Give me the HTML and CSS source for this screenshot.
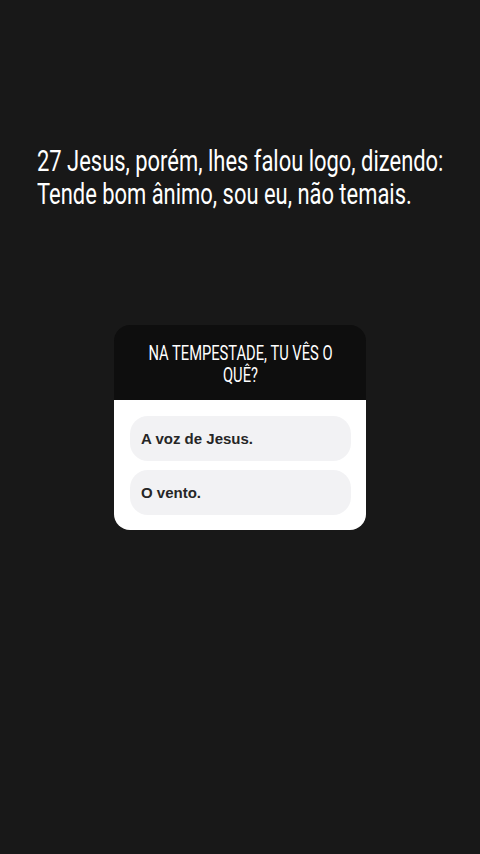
FILE: index.html
```html
<!DOCTYPE html>
<html lang="pt">
<head>
  <meta charset="UTF-8" />
  <meta name="viewport" content="width=device-width, initial-scale=1" />
  <title>Story</title>
  <link rel="stylesheet" href="styles.css">
</head>
<body>
  <div class="story">
    <p class="verse">27 Jesus, porém, lhes falou logo, dizendo:<br>Tende bom ânimo, sou eu, não temais.</p>

    <div class="quiz">
      <div class="quiz-head"><span class="quiz-title">NA TEMPESTADE, TU VÊS O<br>QUÊ?</span></div>
      <div class="quiz-body">
        <div class="option">A voz de Jesus.</div>
        <div class="option">O vento.</div>
      </div>
    </div>
  </div>
</body>
</html>
```

FILE: styles.css
```css
body {
  margin: 0;
  background-color: #181818;
  font-family: "Liberation Sans", Arial, sans-serif;
}
.story {
  height: 854px;
  padding: 144px 0 0 37px;
  box-sizing: border-box;
}
/* condensed display type: no narrow face installed, so squeeze Roboto */
.verse {
  margin: 0;
  width: 600px;
  color: #fff;
  font-family: Roboto, sans-serif;
  font-size: 30px;
  line-height: 33px;
  white-space: nowrap;
  transform: scaleX(0.731);
  transform-origin: left top;
}
.quiz {
  width: 252px;
  margin: 115px 0 0 77px;
  border-radius: 16px;
  overflow: hidden;
}
.quiz-head {
  background: #0e0e0e;
  color: #fff;
  height: 75px;
  box-sizing: border-box;
  padding-top: 17px;
  display: flex;
  justify-content: center;
  align-items: flex-start;
}
.quiz-title {
  flex: none;
  text-align: center;
  font-family: Roboto, sans-serif;
  font-size: 21px;
  line-height: 22px;
  white-space: nowrap;
  transform: scaleX(0.70);
}
.quiz-body {
  background: #fff;
  padding: 16px 15px 15px 16px;
  display: flex;
  flex-direction: column;
  gap: 9px;
}
.option {
  height: 45px;
  border-radius: 18px;
  background: #f2f2f4;
  color: #262626;
  font-size: 15px;
  font-weight: bold;
  display: flex;
  align-items: center;
  padding-left: 11px;
}
```
